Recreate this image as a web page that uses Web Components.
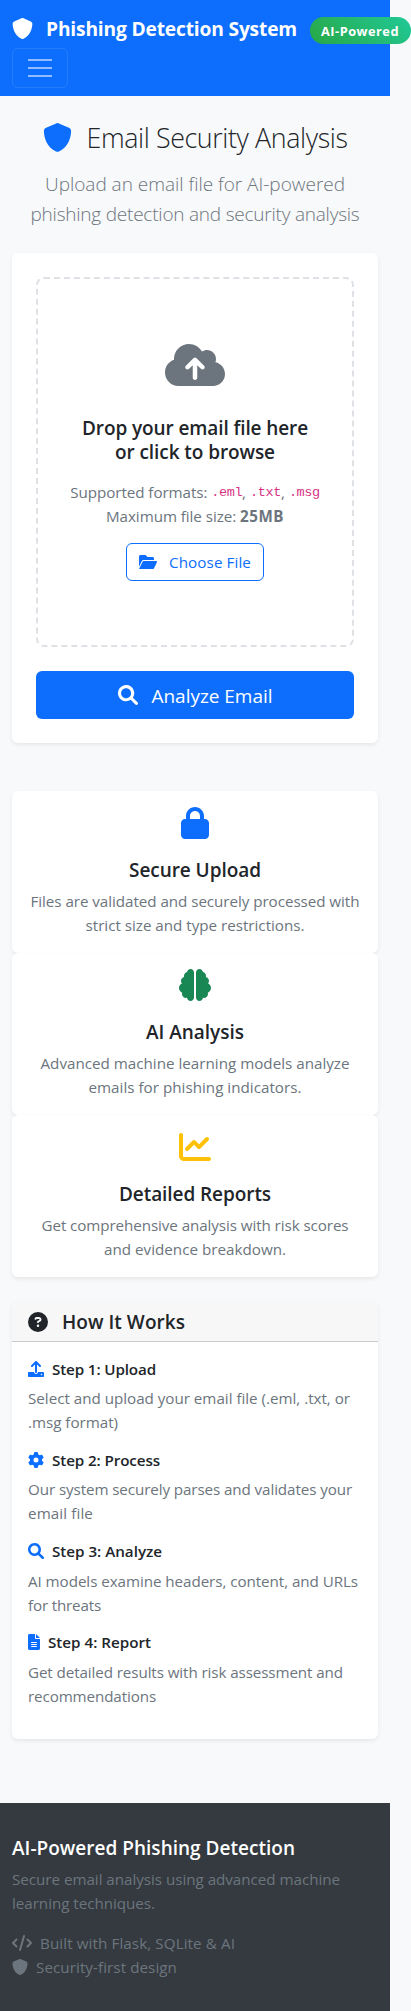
<!DOCTYPE html>
<html lang="en">
<head>
<meta charset="utf-8">
<title>Phishing Detection System</title>
<style>
html{background:#f8f9fa}
body{margin:0;width:411px;color:#212529;font-family:"Open Sans","Noto Sans",sans-serif;font-size:15.2px;line-height:24px}
</style>
</head>
<body>
<app-navbar>
  <fit-text slot="brand" w="251">Phishing Detection System</fit-text>
  <fit-text slot="badge" w="78">AI-Powered</fit-text>
</app-navbar>
<page-hero>
  <fit-text slot="title" w="261">Email Security Analysis</fit-text>
  <fit-text slot="lead" w="300">Upload an email file for AI-powered</fit-text>
  <fit-text slot="lead" w="329">phishing detection and security analysis</fit-text>
</page-hero>
<upload-card></upload-card>
<section-stack>
  <feature-card icon="lock" color="#0d6efd">
    <fit-text slot="title" w="132">Secure Upload</fit-text>
    <fit-text w="329">Files are validated and securely processed with</fit-text>
    <fit-text w="219">strict size and type restrictions.</fit-text>
  </feature-card>
  <feature-card icon="brain" color="#198754">
    <fit-text slot="title" w="98">AI Analysis</fit-text>
    <fit-text w="309">Advanced machine learning models analyze</fit-text>
    <fit-text w="213">emails for phishing indicators.</fit-text>
  </feature-card>
  <feature-card icon="chart" color="#ffc107">
    <fit-text slot="title" w="152">Detailed Reports</fit-text>
    <fit-text w="307">Get comprehensive analysis with risk scores</fit-text>
    <fit-text w="182">and evidence breakdown.</fit-text>
  </feature-card>
</section-stack>
<how-card>
  <fit-text slot="title" w="123">How It Works</fit-text>
  <step-item icon="upload">
    <fit-text slot="title" w="104">Step 1: Upload</fit-text>
    <fit-text w="322">Select and upload your email file (.eml, .txt, or</fit-text>
    <fit-text w="90">.msg format)</fit-text>
  </step-item>
  <step-item icon="gear">
    <fit-text slot="title" w="108">Step 2: Process</fit-text>
    <fit-text w="324">Our system securely parses and validates your</fit-text>
    <fit-text w="65">email file</fit-text>
  </step-item>
  <step-item icon="search">
    <fit-text slot="title" w="110">Step 3: Analyze</fit-text>
    <fit-text w="330">AI models examine headers, content, and URLs</fit-text>
    <fit-text w="73">for threats</fit-text>
  </step-item>
  <step-item icon="file">
    <fit-text slot="title" w="103">Step 4: Report</fit-text>
    <fit-text w="315">Get detailed results with risk assessment and</fit-text>
    <fit-text w="128">recommendations</fit-text>
  </step-item>
</how-card>
<app-footer></app-footer>

<script>
const ICONS={
shield:[512,'M256 0c4.6 0 9.2 1 13.4 2.9L457.7 82.8c22 9.3 38.4 31 38.3 57.2c-.5 99.2-41.3 280.7-213.6 363.2c-16.7 8-36.1 8-52.8 0C57.3 420.7 16.5 239.2 16 140c-.1-26.2 16.3-47.9 38.3-57.2L242.7 2.9C246.8 1 251.4 0 256 0z'],
cloud:[640,'M144 480C64.5 480 0 415.5 0 336c0-62.8 40.2-116.2 96.2-135.9c-.1-2.7-.2-5.4-.2-8.1c0-88.4 71.6-160 160-160c59.3 0 111 32.2 138.7 80.2C409.9 102 428.3 96 448 96c53 0 96 43 96 96c0 12.2-2.3 23.8-6.4 34.6C596 238.4 640 290.1 640 352c0 70.7-57.3 128-128 128H144zm79-217c-9.4 9.4-9.4 24.6 0 33.9s24.6 9.4 33.9 0l39-39V392c0 13.3 10.7 24 24 24s24-10.7 24-24V257.9l39 39c9.4 9.4 24.6 9.4 33.9 0s9.4-24.6 0-33.9l-80-80c-9.4-9.4-24.6-9.4-33.9 0l-80 80z'],
lock:[448,'M144 144v48H304V144c0-44.2-35.8-80-80-80s-80 35.8-80 80zM80 192V144C80 64.5 144.5 0 224 0s144 64.5 144 144v48h16c35.3 0 64 28.7 64 64V448c0 35.3-28.7 64-64 64H64c-35.3 0-64-28.7-64-64V256c0-35.3 28.7-64 64-64H80z'],
brain:[512,'M184 0c30.9 0 56 25.1 56 56V456c0 30.9-25.1 56-56 56c-28.9 0-52.7-21.9-55.7-50.1c-5.2 1.4-10.7 2.1-16.3 2.1c-35.3 0-64-28.7-64-64c0-7.4 1.3-14.6 3.6-21.2C21.4 367.4 0 338.2 0 304c0-31.9 18.7-59.5 45.8-72.3C37.1 220.8 32 207 32 192c0-30.7 21.6-56.3 50.4-62.6C80.8 123.9 80 118 80 112c0-29.9 20.6-55.1 48.3-62.1C131.3 21.9 155.1 0 184 0zM328 0c28.9 0 52.6 21.9 55.7 49.9c27.8 7 48.3 32.1 48.3 62.1c0 6-.8 11.9-2.4 17.4c28.8 6.2 50.4 31.9 50.4 62.6c0 15-5.1 28.8-13.8 39.7C493.3 244.5 512 272.1 512 304c0 34.2-21.4 63.4-51.6 74.8c2.3 6.6 3.6 13.8 3.6 21.2c0 35.3-28.7 64-64 64c-5.6 0-11.1-.7-16.3-2.1c-3 28.2-26.8 50.1-55.7 50.1c-30.9 0-56-25.1-56-56V56c0-30.9 25.1-56 56-56z'],
chart:[512,'M64 64c0-17.7-14.3-32-32-32S0 46.3 0 64V400c0 44.2 35.8 80 80 80H480c17.7 0 32-14.3 32-32s-14.3-32-32-32H80c-8.8 0-16-7.2-16-16V64zm406.6 86.6c12.5-12.5 12.5-32.8 0-45.3s-32.8-12.5-45.3 0L320 210.7l-57.4-57.4c-12.5-12.5-32.8-12.5-45.3 0l-112 112c-12.5 12.5-12.5 32.8 0 45.3s32.8 12.5 45.3 0L240 221.3l57.4 57.4c12.5 12.5 32.8 12.5 45.3 0l128-128z'],
search:[512,'M500.3 443.7l-119.7-119.7c27.22-40.41 40.65-90.9 33.46-144.7C401.8 87.79 326.8 13.32 235.2 1.723C99.01-15.51-15.51 99.01 1.724 235.2c11.6 91.64 86.08 166.7 177.6 178.9c53.8 7.189 104.3-6.236 144.7-33.46l119.7 119.7c15.62 15.62 40.95 15.62 56.57 0C515.9 484.7 515.9 459.3 500.3 443.7zM79.1 208c0-70.58 57.42-128 128-128s128 57.42 128 128c0 70.58-57.42 128-128 128S79.1 278.6 79.1 208z'],
question:[512,'M256 512A256 256 0 1 0 256 0a256 256 0 1 0 0 512zM169.8 165.3c7.9-22.3 29.1-37.3 52.8-37.3h58.3c34.9 0 63.1 28.3 63.1 63.1c0 22.6-12.1 43.5-31.7 54.8L280 264.4c-.2 13-10.9 23.6-24 23.6c-13.3 0-24-10.7-24-24V250.5c0-8.6 4.6-16.5 12.1-20.8l44.3-25.4c4.7-2.7 7.6-7.7 7.6-13.1c0-8.4-6.8-15.1-15.1-15.1H222.6c-3.4 0-6.4 2.1-7.5 5.3l-.4 1.2c-4.4 12.5-18.2 19-30.6 14.6s-19-18.2-14.6-30.6l.4-1.2zM224 352a32 32 0 1 1 64 0 32 32 0 1 1-64 0z'],
upload:[512,'M288 109.3V352c0 17.7-14.3 32-32 32s-32-14.3-32-32V109.3l-73.4 73.4c-12.5 12.5-32.8 12.5-45.3 0s-12.5-32.8 0-45.3l128-128c12.5-12.5 32.8-12.5 45.3 0l128 128c12.5 12.5 12.5 32.8 0 45.3s-32.8 12.5-45.3 0L288 109.3zM32 352H192c0 35.3 28.7 64 64 64s64-28.7 64-64H480c17.7 0 32 14.3 32 32v96c0 17.7-14.3 32-32 32H32c-17.7 0-32-14.3-32-32V384c0-17.7 14.3-32 32-32zM432 456a24 24 0 1 0 0-48 24 24 0 1 0 0 48z'],
gear:[512,'M495.9 166.6c3.2 8.7 .5 18.4-6.4 24.6l-43.3 39.4c1.1 8.3 1.7 16.8 1.7 25.4s-.6 17.1-1.7 25.4l43.3 39.4c6.9 6.2 9.6 15.9 6.4 24.6c-4.4 11.9-9.7 23.3-15.8 34.3l-4.7 8.1c-6.6 11-14 21.4-22.1 31.2c-5.9 7.2-15.7 9.6-24.5 6.8l-55.7-17.7c-13.4 10.3-28.2 18.9-44 25.4l-12.5 57.1c-2 9.1-9 16.3-18.2 17.8c-13.8 2.3-28 3.5-42.5 3.5s-28.7-1.2-42.5-3.5c-9.2-1.5-16.2-8.7-18.2-17.8l-12.5-57.1c-15.8-6.5-30.6-15.1-44-25.4L83.1 425.9c-8.8 2.8-18.6 .3-24.5-6.8c-8.1-9.8-15.5-20.2-22.1-31.2l-4.7-8.1c-6.1-11-11.4-22.4-15.8-34.3c-3.2-8.7-.5-18.4 6.4-24.6l43.3-39.4C64.6 273.1 64 264.6 64 256s.6-17.1 1.7-25.4L22.4 191.2c-6.9-6.2-9.6-15.9-6.4-24.6c4.4-11.9 9.7-23.3 15.8-34.3l4.7-8.1c6.6-11 14-21.4 22.1-31.2c5.9-7.2 15.7-9.6 24.5-6.8l55.7 17.7c13.4-10.3 28.2-18.9 44-25.4l12.5-57.1c2-9.1 9-16.3 18.2-17.8C227.3 1.2 241.5 0 256 0s28.7 1.2 42.5 3.5c9.2 1.5 16.2 8.7 18.2 17.8l12.5 57.1c15.8 6.5 30.6 15.1 44 25.4l55.7-17.7c8.8-2.8 18.6-.3 24.5 6.8c8.1 9.8 15.5 20.2 22.1 31.2l4.7 8.1c6.1 11 11.4 22.4 15.8 34.3zM256 336a80 80 0 1 0 0-160 80 80 0 1 0 0 160z'],
file:[384,'M256 0v128h128L256 0zM224 128L224 0H48C21.49 0 0 21.49 0 48v416C0 490.5 21.49 512 48 512h288c26.51 0 48-21.49 48-48V160h-127.1C238.3 160 224 145.7 224 128zM272 416h-160C103.2 416 96 408.8 96 400C96 391.2 103.2 384 112 384h160c8.836 0 16 7.162 16 16C288 408.8 280.8 416 272 416zM272 352h-160C103.2 352 96 344.8 96 336C96 327.2 103.2 320 112 320h160c8.836 0 16 7.162 16 16C288 344.8 280.8 352 272 352zM288 272C288 280.8 280.8 288 272 288h-160C103.2 288 96 280.8 96 272C96 263.2 103.2 256 112 256h160C280.8 256 288 263.2 288 272z'],
code:[640,'M392.8 1.2c-17-4.9-34.7 5-39.6 22l-128 448c-4.9 17 5 34.7 22 39.6s34.7-5 39.6-22l128-448c4.9-17-5-34.7-22-39.6zm80.6 120.1c-12.5 12.5-12.5 32.8 0 45.3L562.7 256l-89.4 89.4c-12.5 12.5-12.5 32.8 0 45.3s32.8 12.5 45.3 0l112-112c12.5-12.5 12.5-32.8 0-45.3l-112-112c-12.5-12.5-32.8-12.5-45.3 0zm-306.7 0c-12.5-12.5-32.8-12.5-45.3 0l-112 112c-12.5 12.5-12.5 32.8 0 45.3l112 112c12.5 12.5 32.8 12.5 45.3 0s12.5-32.8 0-45.3L77.3 256l89.4-89.4c12.5-12.5 12.5-32.8 0-45.3z'],
folder:[576,'M147.8 192H480V144C480 117.5 458.5 96 432 96h-160l-64-64h-160C21.49 32 0 53.49 0 80v328.4l90.54-181.1C101.4 205.6 123.4 192 147.8 192zM543.1 224H147.8C135.7 224 124.8 230.8 119.4 241.7L0 480h447.1c12.12 0 23.2-6.852 28.62-17.69l96-192C583.2 249 567.7 224 543.1 224z']
};

function define(name,html){
  customElements.define(name,class extends HTMLElement{
    constructor(){super();this.attachShadow({mode:'open'}).innerHTML=typeof html==='function'?html(this):html;}
  });
}

/* Icon sized by its height; width follows the glyph's own proportions. */
customElements.define('ui-icon',class extends HTMLElement{
  connectedCallback(){
    if(this.shadowRoot)return;
    const [w,d]=ICONS[this.getAttribute('name')],s=+this.getAttribute('size')||16;
    this.attachShadow({mode:'open'}).innerHTML=`<style>:host{display:inline-flex;flex:none}svg{display:block;fill:currentColor}</style><svg viewBox="0 0 ${w} 512" width="${s*w/512}" height="${s}"><path fill-rule="evenodd" d="${d}"/></svg>`;
  }
});

/* One line of text whose tracking is adjusted to reach a given width. */
const lines=new Set();
customElements.define('fit-text',class extends HTMLElement{
  constructor(){super();this.attachShadow({mode:'open'}).innerHTML='<style>:host{display:block;width:max-content;white-space:pre}</style><slot></slot>';}
  connectedCallback(){lines.add(this);}
  fit(){
    const w=+this.getAttribute('w');
    this.style.letterSpacing=(w-this.getBoundingClientRect().width)/this.textContent.length+'px';
  }
});

define('app-navbar',`<style>
:host{display:block;box-sizing:border-box;width:411px;height:96px;padding:8px 0 8px 12px;background:linear-gradient(#0d6efd,#0d6efd) 0 0/390px 100% no-repeat;color:#fff}
.brand{display:flex;align-items:center;height:40px;font-size:19.2px;font-weight:700}
.brand ui-icon{margin-right:13px}
.brand slot{display:block;padding-top:2px}
.badge{box-sizing:border-box;flex:none;height:27px;margin:5px 0 0 13px;padding:0 11px;border-radius:14px;background:linear-gradient(45deg,#28a745,#20c997);font-size:12.8px;line-height:27px;width:101px}
.badge slot{padding-top:1px}
.toggle{box-sizing:border-box;display:flex;flex-direction:column;justify-content:center;align-items:center;gap:6px;width:56px;height:40px;padding:0;border:1px solid rgba(255,255,255,.1);border-radius:6px;background:none}
.toggle i{width:24px;height:2px;background:rgba(255,255,255,.55)}
</style><div class="brand"><ui-icon name="shield" size="21"></ui-icon><slot name="brand"></slot><div class="badge"><slot name="badge"></slot></div></div>
<button class="toggle" aria-label="Toggle navigation"><i></i><i></i><i></i></button>`);

define('page-hero',`<style>
:host{display:flex;flex-direction:column;align-items:center;box-sizing:border-box;width:390px;padding:24px 0 0;height:157px;color:#6c757d;font-size:19px;font-weight:300;line-height:30px}
.t{display:flex;align-items:center;height:34px;margin-bottom:15px;color:#212529;font-size:26.8px;line-height:34px}
.t slot{display:block;padding-top:2px}
.t ui-icon{color:#0d6efd;margin:1px 15px 0 0}
</style><div class="t"><ui-icon name="shield" size="29"></ui-icon><slot name="title"></slot></div><slot name="lead"></slot>`);

define('upload-card',`<style>
:host{display:block;box-sizing:border-box;margin:0 12px;width:366px;height:490px;padding:24px;background:#fff;border-radius:6px;box-shadow:0 2px 4px rgba(0,0,0,.075)}
.drop{box-sizing:border-box;display:flex;flex-direction:column;align-items:center;height:370px;padding-top:62px;border:2px dashed #dee2e6;border-radius:8px;color:#6c757d}
h5{display:flex;flex-direction:column;align-items:center;margin:27px 0 16px;color:#212529;font-size:19px;line-height:24px;font-weight:600}
.row{display:flex;justify-content:center;height:24px}
.row code{font:13.5px/25px "Liberation Mono",monospace;color:#d63384}
b{font-weight:700}
.choose{box-sizing:border-box;display:flex;align-items:center;width:138px;height:38px;margin-top:15px;padding:0 12px;border:1px solid #0d6efd;border-radius:6px;color:#0d6efd}
.choose fit-text{margin-left:12px}
.go{display:flex;align-items:center;justify-content:center;height:48px;margin-top:24px;border-radius:6px;background:#0d6efd;color:#fff;font-size:19px}
.go fit-text{margin:1px 0 0 14px}
</style>
<div class="drop"><ui-icon name="cloud" size="48"></ui-icon>
<h5><fit-text w="226">Drop your email file here</fit-text><fit-text w="160">or click to browse</fit-text></h5>
<div class="row"><fit-text w="141">Supported formats: </fit-text><code><fit-text w="30.8">.eml</fit-text></code><fit-text w="8">, </fit-text><code><fit-text w="30.8">.txt</fit-text></code><fit-text w="8">, </fit-text><code><fit-text w="30.8">.msg</fit-text></code></div>
<div class="row"><fit-text w="134">Maximum file size: </fit-text><b><fit-text w="44">25MB</fit-text></b></div>
<div class="choose"><ui-icon name="folder" size="16"></ui-icon><fit-text w="82">Choose File</fit-text></div></div>
<div class="go"><ui-icon name="search" size="20"></ui-icon><fit-text w="121">Analyze Email</fit-text></div>`);

define('section-stack',`<style>:host{display:flex;flex-direction:column;box-sizing:border-box;width:390px;padding:48px 12px 24px}</style><slot></slot>`);

define('feature-card',el=>`<style>
:host{display:flex;flex-direction:column;align-items:center;box-sizing:border-box;height:162px;padding-top:16px;background:#fff;border-radius:6px;box-shadow:0 2px 4px rgba(0,0,0,.075);color:#6c757d}
ui-icon{color:${el.getAttribute('color')};margin-bottom:19px}
.t{margin-bottom:7px;color:#212529;font-size:19px;font-weight:600}
</style><ui-icon name="${el.getAttribute('icon')}" size="32"></ui-icon><div class="t"><slot name="title"></slot></div><slot></slot>`);

define('how-card',`<style>
:host{display:block;box-sizing:border-box;width:366px;margin:0 12px;height:438px;background:#fff;border-radius:6px;box-shadow:0 2px 4px rgba(0,0,0,.075)}
header{box-sizing:border-box;display:flex;align-items:center;gap:14px;height:41px;padding:1px 16px 0;border-bottom:1px solid rgba(0,0,0,.175);border-radius:6px 6px 0 0;background:#f7f7f7;font-size:19px;font-weight:600}
.b{padding:17px 16px 16px}
</style><header><ui-icon name="question" size="20"></ui-icon><slot name="title"></slot></header><div class="b"><slot></slot></div>`);

define('step-item',el=>`<style>
:host{display:block;height:91.2px;color:#6c757d}
.t{display:flex;align-items:center;gap:8px;height:19.2px;margin-bottom:8px;color:#212529;font-weight:600}
ui-icon{color:#0d6efd}
</style><div class="t"><ui-icon name="${el.getAttribute('icon')}" size="16"></ui-icon><slot name="title"></slot></div><slot></slot>`);

define('app-footer',`<style>
:host{display:block;box-sizing:border-box;width:390px;height:208px;margin-top:64px;padding:33px 12px;background:#343a40;color:#6c757d}
h5{margin:0 0 7px;color:#fff;font-size:19px;line-height:24px;font-weight:600}
.r{display:flex;align-items:center;gap:8px;height:24px}
.m{margin-top:16px}
</style><h5><fit-text w="283">AI-Powered Phishing Detection</fit-text></h5>
<fit-text w="328">Secure email analysis using advanced machine</fit-text><fit-text w="143">learning techniques.</fit-text>
<div class="r m"><ui-icon name="code" size="16"></ui-icon><fit-text w="195">Built with Flask, SQLite &amp; AI</fit-text></div>
<div class="r"><ui-icon name="shield" size="16"></ui-icon><fit-text w="141">Security-first design</fit-text></div>`);

lines.forEach(l=>l.fit());
</script>
</body>
</html>
